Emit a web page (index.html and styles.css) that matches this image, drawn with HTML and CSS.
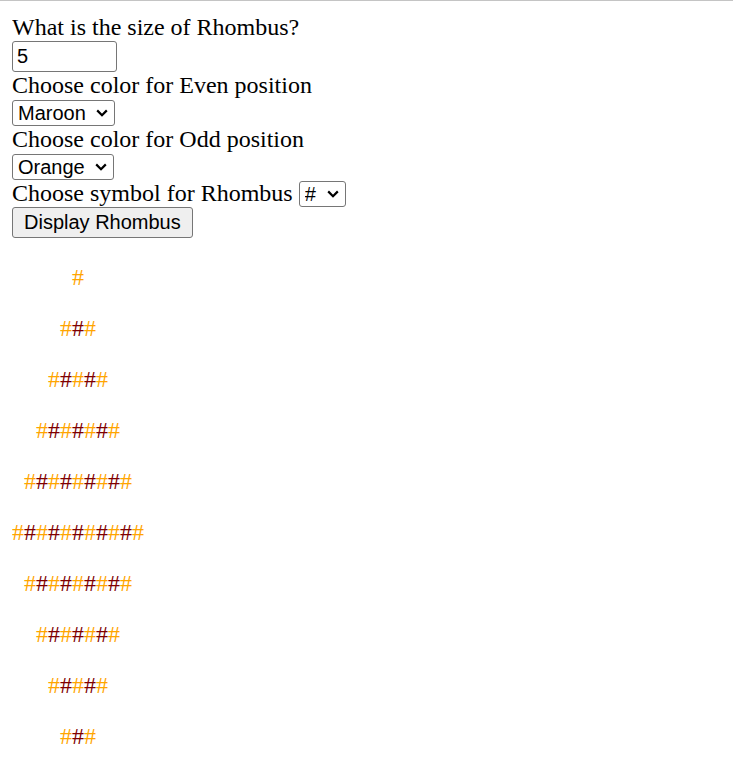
FILE: index.html
```
<!DOCTYPE html>
<html>
<head>
<meta charset="utf-8">
<title>Rhombus</title>
<link rel="stylesheet" href="styles.css">
</head>
<body>
<div class="form">
What is the size of Rhombus?<br>
<input class="size-input" type="text" value="5"><br>
Choose color for Even position<br>
<select class="pick pick-even"><option>Maroon</option><option>Orange</option></select><br>
Choose color for Odd position<br>
<select class="pick pick-odd"><option>Orange</option><option>Maroon</option></select><br>
Choose symbol for Rhombus <select class="pick pick-symbol"><option>#</option><option>*</option></select><br>
<button class="btn" type="button">Display Rhombus</button>
</div>
<div class="rhombus">
<p>&nbsp;&nbsp;&nbsp;&nbsp;&nbsp;&nbsp;&nbsp;&nbsp;&nbsp;&nbsp;<span class="o">#</span></p>
<p>&nbsp;&nbsp;&nbsp;&nbsp;&nbsp;&nbsp;&nbsp;&nbsp;<span class="o">#</span><span class="m">#</span><span class="o">#</span></p>
<p>&nbsp;&nbsp;&nbsp;&nbsp;&nbsp;&nbsp;<span class="o">#</span><span class="m">#</span><span class="o">#</span><span class="m">#</span><span class="o">#</span></p>
<p>&nbsp;&nbsp;&nbsp;&nbsp;<span class="o">#</span><span class="m">#</span><span class="o">#</span><span class="m">#</span><span class="o">#</span><span class="m">#</span><span class="o">#</span></p>
<p>&nbsp;&nbsp;<span class="o">#</span><span class="m">#</span><span class="o">#</span><span class="m">#</span><span class="o">#</span><span class="m">#</span><span class="o">#</span><span class="m">#</span><span class="o">#</span></p>
<p><span class="o">#</span><span class="m">#</span><span class="o">#</span><span class="m">#</span><span class="o">#</span><span class="m">#</span><span class="o">#</span><span class="m">#</span><span class="o">#</span><span class="m">#</span><span class="o">#</span></p>
<p>&nbsp;&nbsp;<span class="o">#</span><span class="m">#</span><span class="o">#</span><span class="m">#</span><span class="o">#</span><span class="m">#</span><span class="o">#</span><span class="m">#</span><span class="o">#</span></p>
<p>&nbsp;&nbsp;&nbsp;&nbsp;<span class="o">#</span><span class="m">#</span><span class="o">#</span><span class="m">#</span><span class="o">#</span><span class="m">#</span><span class="o">#</span></p>
<p>&nbsp;&nbsp;&nbsp;&nbsp;&nbsp;&nbsp;<span class="o">#</span><span class="m">#</span><span class="o">#</span><span class="m">#</span><span class="o">#</span></p>
<p>&nbsp;&nbsp;&nbsp;&nbsp;&nbsp;&nbsp;&nbsp;&nbsp;<span class="o">#</span><span class="m">#</span><span class="o">#</span></p>
<p>&nbsp;&nbsp;&nbsp;&nbsp;&nbsp;&nbsp;&nbsp;&nbsp;&nbsp;&nbsp;<span class="o">#</span></p>
</div>
</body>
</html>
```
FILE: styles.css
```
html {
  background: #ffffff;
}
body {
  margin: 14px 12px 12px;
  font-family: "Liberation Serif", "Times New Roman", serif;
  font-size: 24px;
  color: #000000;
}
body::before {
  content: "";
  position: fixed;
  top: 0;
  left: 0;
  right: 0;
  height: 1px;
  background: #c4c4c4;
}
.size-input,
.pick,
.btn {
  font-family: "Liberation Sans", Arial, sans-serif;
  font-size: 20px;
  color: #000000;
  box-sizing: border-box;
  border: 1px solid #767676;
  border-radius: 3px;
  margin: 0;
  vertical-align: baseline;
}
.size-input {
  width: 105px;
  height: 31px;
  padding: 1px 4px;
  background: #ffffff;
}
.pick {
  -webkit-appearance: none;
  appearance: none;
  height: 26px;
  padding: 0 24px 0 5px;
  background-color: #ffffff;
  background-image: url("data:image/svg+xml;utf8,<svg xmlns='http://www.w3.org/2000/svg' width='12' height='8' viewBox='0 0 12 8'><path d='M1.2 1.4 L6 6.2 L10.8 1.4' fill='none' stroke='black' stroke-width='2.2'/></svg>");
  background-repeat: no-repeat;
  background-position: right 6px center;
}
.pick-even {
  width: 103px;
}
.pick-odd {
  width: 102px;
}
.pick-symbol {
  width: 47px;
}
.btn {
  height: 31px;
  padding: 1px 11px;
  background: #efefef;
}
.rhombus {
  padding-top: 2px;
}
.rhombus p {
  margin: 24px 0;
  font-size: 24px;
  white-space: nowrap;
}
.o {
  color: #ffa500;
}
.m {
  color: #800000;
}
```
